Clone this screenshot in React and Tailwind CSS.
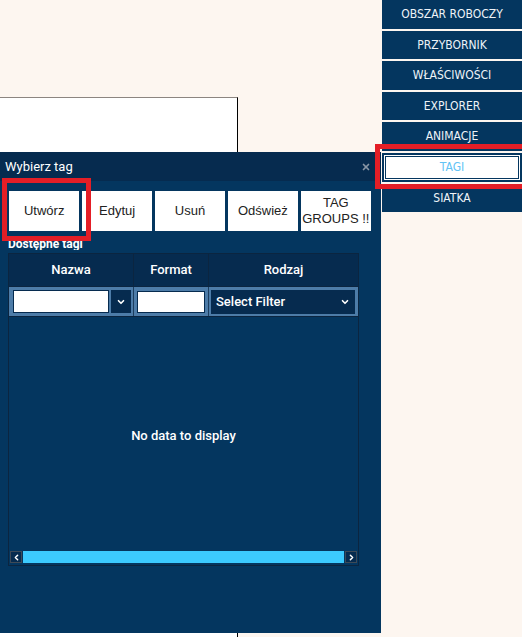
import React from 'react';
import { ChevronDown, ChevronLeft, ChevronRight, X } from 'lucide-react';

const menu = [
  { id: 'workspace', label: 'OBSZAR ROBOCZY' },
  { id: 'toolbox', label: 'PRZYBORNIK' },
  { id: 'props', label: 'WŁAŚCIWOŚCI' },
  { id: 'explorer', label: 'EXPLORER' },
  { id: 'anim', label: 'ANIMACJE' },
  { id: 'tags', label: 'TAGI' },
  { id: 'grid', label: 'SIATKA' },
];

const actions = ['Utwórz', 'Edytuj', 'Usuń', 'Odśwież', 'TAG GROUPS !!'];

function SideMenu({ current }) {
  return (
    <nav className="w-[140px] flex flex-col gap-[2px] font-['DejaVu_Sans_Condensed','DejaVu_Sans',sans-serif] text-[12px]">
      {menu.map((item) => {
        const isActive = item.id === current;
        if (isActive) {
          return (
            <div key={item.id} className="h-[29px] border-2 border-[#04365f] bg-white p-[1px] flex">
              <div className="flex-1 border border-[#04365f] bg-white flex items-center justify-center text-[#62c3f5]">
                {item.label}
              </div>
            </div>
          );
        }
        return (
          <div key={item.id} className="h-[28.5px] bg-[#04365f] flex items-center justify-center text-[#eef3f8]">
            {item.label}
          </div>
        );
      })}
    </nav>
  );
}

function TagDialog() {
  return (
    <div className="absolute left-0 top-[152px] w-[381px] h-[481px] flex flex-col bg-[#04365f] font-['Roboto','Liberation_Sans',sans-serif] text-white">
      {/* Title bar */}
      <div className="h-[29px] bg-[#062b4f] flex items-center justify-between pl-[5px] pr-[10px]">
        <span className="text-[13px]">Wybierz tag</span>
        <X className="w-[10px] h-[10px] text-[#8896a6]" strokeWidth={4} />
      </div>

      <div className="flex-1 pt-[10px] pl-[9px]">
        {/* Action buttons */}
        <div className="w-[362px] h-[40px] flex gap-[2.5px] font-['Liberation_Sans',Arial,sans-serif] text-[13px] text-[#222]">
          {actions.map((a) => (
            <button key={a} className="flex-1 bg-white flex items-center justify-center text-center leading-[16px] whitespace-nowrap">
              {a === 'TAG GROUPS !!' ? (
                <span>TAG<br />GROUPS !!</span>
              ) : (
                a
              )}
            </button>
          ))}
        </div>

        {/* Label */}
        <div className="h-[19px] overflow-hidden -ml-px pt-[6px]">
          <div className="text-[12px] font-bold leading-[14px]">Dostępne tagi</div>
        </div>

        {/* Grid */}
        <div className="mt-[3px] -ml-px w-[351px] border border-[#0b2540]">
          <div className="h-[32px] bg-[#062b4f] grid grid-cols-[125px_75px_1fr] text-[13px] font-medium">
            <div className="flex items-center justify-center border-r border-[#0b2540]">Nazwa</div>
            <div className="flex items-center justify-center border-r border-[#0b2540]">Format</div>
            <div className="flex items-center justify-center">Rodzaj</div>
          </div>
          <div className="h-[30px] bg-[#4d7ca8] grid grid-cols-[125px_75px_1fr] border-t border-[#0b2540]">
            <div className="flex items-center pl-[4px] border-r border-[#1c3d5e]">
              <div className="w-[96px] h-[23px] bg-white border border-[#062b4f]" />
              <div className="ml-[2px] w-[20px] h-[23px] bg-[#062b4f] flex items-center justify-center">
                <ChevronDown className="w-[10px] h-[10px] text-white" strokeWidth={4} />
              </div>
            </div>
            <div className="flex items-center pl-[3px] border-r border-[#1c3d5e]">
              <div className="w-[68px] h-[22px] bg-white border border-[#062b4f]" />
            </div>
            <div className="flex items-center pl-[2px]">
              <div className="w-[144px] h-[24px] bg-[#062b4f] flex items-center justify-between px-[5px] text-[13px] font-medium">
                <span>Select Filter</span>
                <ChevronDown className="w-[10px] h-[10px] text-white" strokeWidth={4} />
              </div>
            </div>
          </div>
          <div className="h-[249px] border-t border-[#0b2540] flex flex-col">
            <div className="flex-1 flex items-center justify-center text-[13px] font-medium pt-[3px]">
              No data to display
            </div>
            <div className="h-[12px] mb-[2px] mx-[1px] flex gap-[1px]">
              <div className="w-[12px] border border-[#3e4a57] bg-[#062b4f] flex items-center justify-center">
                <ChevronLeft className="w-[9px] h-[9px] text-white" strokeWidth={4} />
              </div>
              <div className="flex-1 bg-[#3ccbff]" />
              <div className="w-[12px] border border-[#3e4a57] bg-[#062b4f] flex items-center justify-center">
                <ChevronRight className="w-[9px] h-[9px] text-white" strokeWidth={4} />
              </div>
            </div>
          </div>
        </div>
      </div>
    </div>
  );
}

export default function App() {
  return (
    <div className="relative w-[522px] h-[637px] overflow-hidden bg-[#fdf6f0] flex">
      {/* Canvas area */}
      <div className="flex-1 pt-[97px]">
        <div className="w-[238px] h-full bg-white border-t border-t-[#8c8580] border-r border-r-black" />
      </div>

      <SideMenu current="tags" />

      <TagDialog />

      {/* Highlights */}
      <div className="absolute left-[2px] top-[178px] w-[89px] h-[63px] border-[5px] border-[#e41e26]" />
      <div className="absolute left-[375px] top-[144px] w-[152px] h-[45px] border-[5px] border-[#e41e26]" />
    </div>
  );
}
